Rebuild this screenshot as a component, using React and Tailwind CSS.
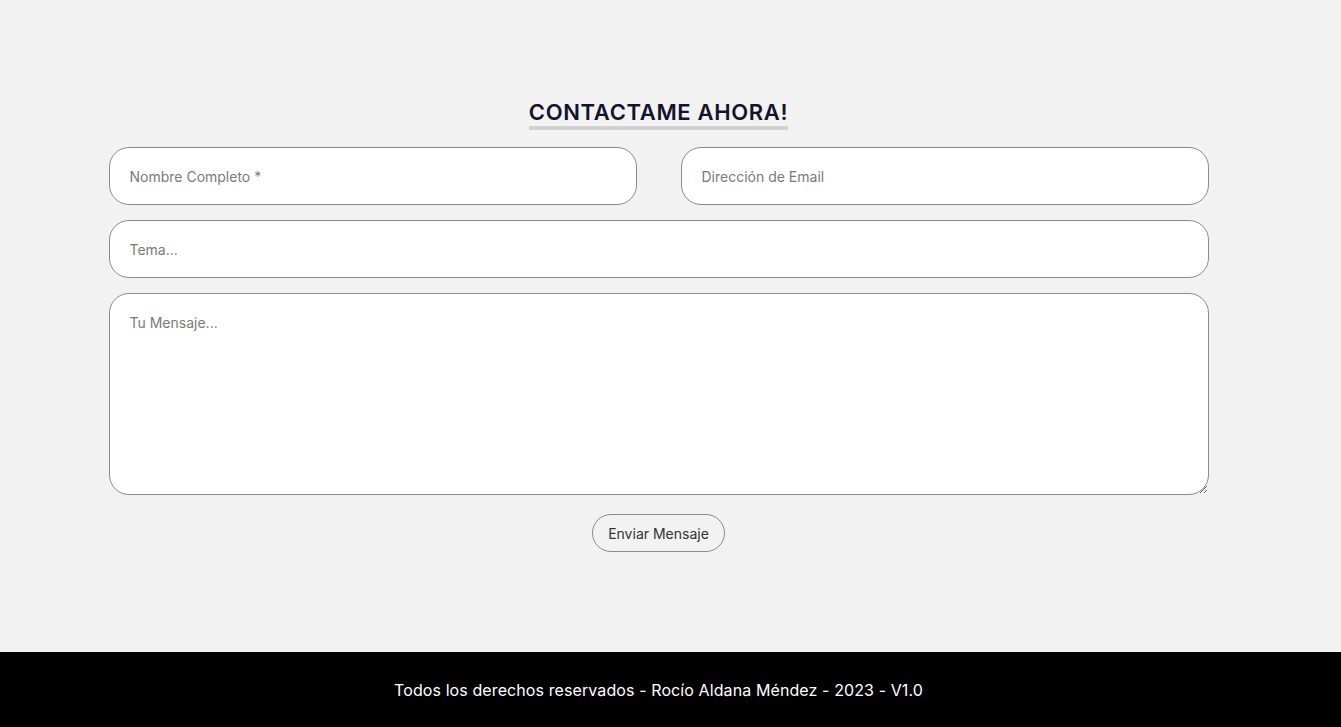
import React from 'react';

export default function App() {
  return (
    <div className="min-h-screen bg-[#f2f2f2] flex flex-col font-['Inter',sans-serif]">
      <main className="flex-1 pr-[24px] pt-[100px]">
        <div className="w-[1100px] mx-auto flex flex-col items-center">
          <h2 className="text-[22px] font-semibold text-[#13132e] leading-[24px] border-b-4 border-[#d2d2d2] pb-[2px] tracking-[0.65px]">
            CONTACTAME AHORA!
          </h2>

          <form className="w-full mt-[17px] flex flex-col gap-[15px]" onSubmit={(e) => e.preventDefault()}>
            <div className="grid grid-cols-2 gap-[44px]">
              <input
                type="text"
                placeholder="Nombre Completo *"
                className="h-[58px] rounded-[20px] border border-[#8a8a8a] bg-white px-[20px] text-[14px] text-[#333] placeholder:text-[#7a7a7a] outline-none"
              />
              <input
                type="email"
                placeholder="Dirección de Email"
                className="h-[58px] rounded-[20px] border border-[#8a8a8a] bg-white px-[20px] text-[14px] text-[#333] placeholder:text-[#7a7a7a] outline-none"
              />
            </div>
            <input
              type="text"
              placeholder="Tema..."
              className="h-[58px] rounded-[20px] border border-[#8a8a8a] bg-white px-[20px] text-[14px] text-[#333] placeholder:text-[#7a7a7a] outline-none"
            />
            <textarea
              placeholder="Tu Mensaje..."
              className="h-[202px] rounded-[20px] border border-[#8a8a8a] bg-white px-[20px] py-[18px] text-[14px] text-[#333] placeholder:text-[#7a7a7a] outline-none"
            />
            <div className="flex justify-center mt-[4px]">
              <button
                type="submit"
                className="h-[38px] px-[15px] rounded-full border border-[#8a8a8a] bg-[#f2f2f2] text-[14px] text-[#333]"
              >
                Enviar Mensaje
              </button>
            </div>
          </form>
        </div>
      </main>

      <footer className="h-[75px] bg-black flex items-center justify-center pr-[24px]">
        <p className="text-white text-[16px] tracking-[0.1px]">Todos los derechos reservados - Rocío Aldana Méndez - 2023 - V1.0</p>
      </footer>
    </div>
  );
}
